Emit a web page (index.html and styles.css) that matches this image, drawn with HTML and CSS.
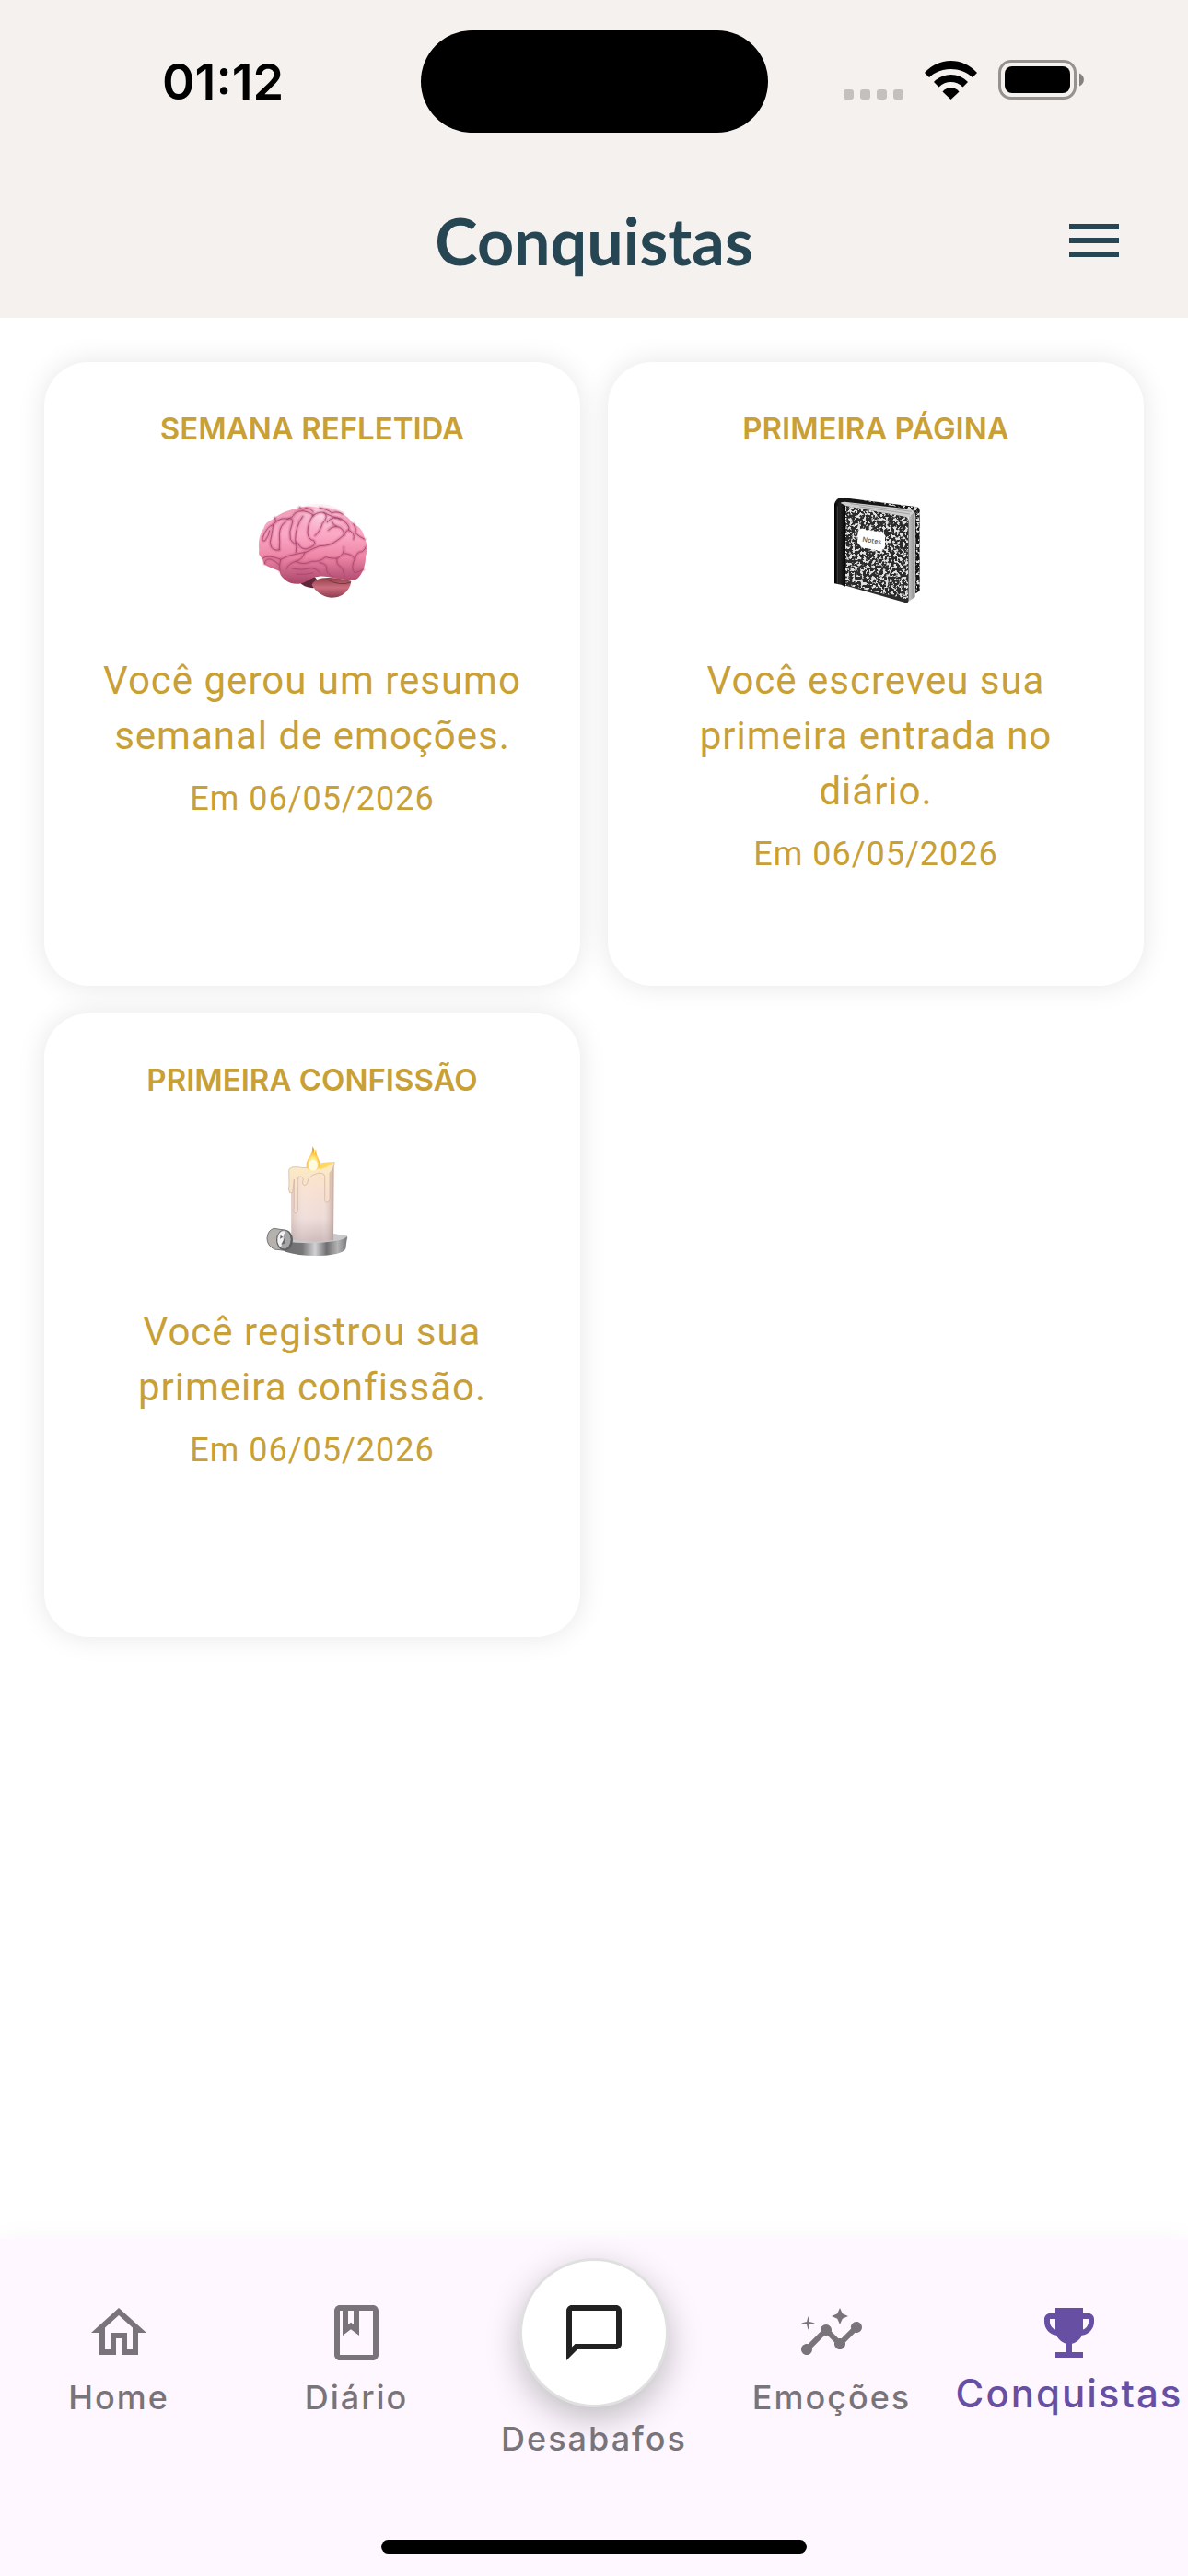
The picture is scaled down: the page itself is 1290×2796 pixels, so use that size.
FILE: index.html
```html
<!DOCTYPE html>
<html lang="pt-BR">
<head>
  <meta charset="UTF-8" />
  <meta name="viewport" content="width=device-width, initial-scale=1.0" />
  <title>Conquistas</title>
  <link rel="stylesheet" href="styles.css">
</head>
<body>

  <header class="topo">
    <div class="status">
      <span class="hora">01:12</span>
      <div class="ilha"></div>
      <div class="indicadores">
        <div class="sinal"><i></i><i></i><i></i><i></i></div>
        <svg class="wifi" viewBox="0 0 57 42">
          <path d="M0 13C16 -4.3 41 -4.3 57 13L52 18C39 6 18 6 5 18Z" />
          <path d="M10 23C20 12.3 37 12.3 47 23L41.5 28.5C34 21.2 23 21.2 15.5 28.5Z" />
          <path d="M19.5 33.5C24.5 27.5 32.5 27.5 37.5 33.5L28.5 42Z" />
        </svg>
        <svg class="bateria" viewBox="0 0 93 43">
          <rect x="1.5" y="1.5" width="82" height="40" rx="12.5" fill="none" stroke="#95928f" stroke-width="3" />
          <rect x="7" y="7" width="71" height="29" rx="8" />
          <path d="M88 14.5C94.500 17 94.500 26 88 28.500Z" fill="#84817f" />
        </svg>
      </div>
    </div>

    <div class="barra">
      <h1>Conquistas</h1>
      <button class="menu" aria-label="Abrir menu">
        <svg viewBox="0 0 24 24"><path d="M3 18h18v-2H3v2zm0-5h18v-2H3v2zm0-7v2h18V6H3z" /></svg>
      </button>
    </div>
  </header>

  <main class="conquistas">
    <article class="card">
      <h2>SEMANA REFLETIDA</h2>
      <svg class="emblema" viewBox="57 51 360 360">
        <defs>
          <linearGradient id="rosa" x1="0" y1="0" x2="0" y2="1">
            <stop offset="0" stop-color="#ee9db6" />
            <stop offset="0.35" stop-color="#fbaac6" />
            <stop offset="0.65" stop-color="#ee86a6" />
            <stop offset="1" stop-color="#a84468" />
          </linearGradient>
          <radialGradient id="brilho" cx="0.56" cy="0.22" r="0.4">
            <stop offset="0" stop-color="#ffdbe8" stop-opacity="0.9" />
            <stop offset="1" stop-color="#ffdbe8" stop-opacity="0" />
          </radialGradient>
          <linearGradient id="cerebelo" x1="0" y1="0" x2="0" y2="1">
            <stop offset="0" stop-color="#8f4048" />
            <stop offset="0.5" stop-color="#cd6d7e" />
            <stop offset="1" stop-color="#8d3c50" />
          </linearGradient>
          <g id="sulcos" fill="none" stroke-linecap="round" stroke-linejoin="round">
            <path d="M76 258Q92 244 134 262Q146 256 160 250Q200 240 216 238Q240 226 260 218Q296 218 318 200Q338 188 350 168" />
            <path d="M134 262Q128 280 132 300" />
            <path d="M82 276Q84 256 104 262Q118 266 128 278" />
            <path d="M116 126Q122 142 110 148Q88 156 76 190Q72 206 84 200Q96 184 98 168" />
            <path d="M110 148Q108 168 104 186Q96 206 104 222Q116 236 130 230" />
            <path d="M120 138Q140 124 156 130Q176 122 172 144Q160 170 166 196Q184 222 184 206" />
            <path d="M130 230Q132 206 130 180Q132 150 150 140" />
            <path d="M156 130Q172 128 180 112Q190 102 208 104Q232 108 240 118" />
            <path d="M184 238Q188 222 182 196Q184 150 206 122" />
            <path d="M240 118Q222 142 222 174Q224 198 242 200Q256 216 216 228Q196 226 192 210" />
            <path d="M240 118Q262 104 276 110Q292 120 270 146Q262 172 246 184" />
            <path d="M276 110Q302 124 332 130Q362 150 356 166" />
            <path d="M286 140Q306 116 330 132M290 166Q300 154 316 154Q340 158 342 182" />
            <path d="M316 154Q304 148 302 140M356 166Q378 176 372 196" />
            <path d="M372 146Q382 162 378 176Q390 188 408 196" />
            <path d="M262 94Q290 100 300 110Q322 104 336 114" />
            <path d="M196 92Q206 104 216 94Q234 96 240 106" />
            <path d="M212 240Q208 260 184 268Q160 274 154 292" />
            <path d="M184 268Q206 282 236 268Q262 270 280 254Q304 260 318 258Q344 246 340 222" />
            <path d="M318 258Q314 278 330 286Q340 294 342 320" />
            <path d="M174 292Q204 298 234 290Q250 290 262 304M186 310Q214 312 240 306" />
            <path d="M262 272Q288 276 284 296Q286 312 306 318" />
            <path d="M342 242Q366 244 376 260Q382 236 400 236Q412 226 411 222" />
            <path d="M376 260Q362 286 374 304Q384 306 404 294" />
          </g>
        </defs>
        <path fill="#60263a" d="M196 336L245 318L270 350L238 355Q208 352 196 336Z" />
        <path fill="url(#cerebelo)" d="M236 344C246 322 280 312 364 332C362 352 344 386 300 386C270 384 246 364 236 344Z" />
        <path fill="none" stroke="#7c3342" stroke-width="3" d="M282 326Q330 350 362 336" />
        <path fill="url(#rosa)" d="M64 232C60 205 66 176 80 158C84 140 104 134 116 126C134 110 158 102 184 96C214 86 240 88 262 94C292 90 318 98 336 114C354 122 364 138 372 146C396 156 406 176 408 196C420 214 416 236 411 252C412 280 400 312 384 324C370 334 352 330 340 326C310 326 282 312 256 318C240 318 228 328 212 336C196 344 166 344 148 328C134 316 130 306 132 300C116 294 100 288 88 282C76 274 76 264 76 258C64 252 62 246 64 232Z" />
        <ellipse cx="255" cy="155" rx="110" ry="75" fill="url(#brilho)" />
        <!-- sombra larga por baixo, risco fino por cima -->
        <use href="#sulcos" stroke="#c25a82" stroke-width="14" stroke-opacity="0.16" />
        <use href="#sulcos" stroke="#c25a82" stroke-width="8" stroke-opacity="0.25" />
        <use href="#sulcos" stroke="#a94468" stroke-width="3" stroke-opacity="0.85" />
      </svg>
      <p class="texto">Você gerou um resumo semanal de emoções.</p>
      <p class="data">Em 06/05/2026</p>
    </article>

    <article class="card">
      <h2>PRIMEIRA PÁGINA</h2>
      <svg class="emblema" viewBox="33 51 360 360">
        <defs>
          <!-- manchas do caderno -->
          <filter id="manchas" x="0" y="0" width="1" height="1">
            <feTurbulence type="fractalNoise" baseFrequency="0.11" numOctaves="2" seed="4" />
            <feColorMatrix type="matrix" values="0 0 0 0 0.75  0 0 0 0 0.75  0 0 0 0 0.75  10 0 0 0 -4.9" />
            <feComposite in2="SourceGraphic" operator="in" />
          </filter>
          <linearGradient id="paginas">
            <stop offset="0" stop-color="#f4f4f4" />
            <stop offset="1" stop-color="#8d8d8d" />
          </linearGradient>
          <linearGradient id="lombada">
            <stop offset="0" stop-color="#000" />
            <stop offset="0.5" stop-color="#242424" />
            <stop offset="1" stop-color="#050505" />
          </linearGradient>
        </defs>
        <path fill="#161616" d="M78 84Q82 60 104 60L348 91Q356 94 356 102V364L344 372L318 352L100 90Z" />
        <path filter="url(#manchas)" d="M160 68L348 91Q356 94 356 102V364L344 370V104L330 98Z" />
        <path fill="#cfcfcf" d="M94 84Q96 74 112 74L326 98Q340 102 342 116V384L318 400V130L110 88Z" />
        <path fill="url(#paginas)" d="M316 126L340 108V384L318 400Z" />
        <path fill="none" stroke="#8c8c8c" stroke-width="2" d="M324 122V394M330 116V390M336 112V386M130 80L330 106M160 90L324 114" />
        <path fill="#2b2b2b" d="M110 86L308 122Q320 126 320 138V396Q318 406 308 402L110 346Z" />
        <path filter="url(#manchas)" d="M112 86L308 122Q318 126 318 138V392L112 344Z" />
        <path fill="url(#lombada)" d="M78 340V84Q80 72 94 76L114 86V350L100 344Z" />
        <path fill="none" stroke="#5a5a5a" stroke-width="2" d="M88 88V340" />
        <path fill="#fff" d="M164 162Q172 158 180 166L226 172Q232 166 238 176Q246 182 243 196V216Q244 228 234 230Q226 238 216 232L178 224Q168 228 162 216Q150 210 154 196V178Q154 168 164 162Z" />
        <text x="168" y="203" transform="rotate(9 168 203)" class="notas">Notes</text>
      </svg>
      <p class="texto">Você escreveu sua primeira entrada no diário.</p>
      <p class="data">Em 06/05/2026</p>
    </article>

    <article class="card">
      <h2>PRIMEIRA CONFISSÃO</h2>
      <svg class="emblema" viewBox="27 42 360 360">
        <defs>
          <linearGradient id="metal">
            <stop offset="0" stop-color="#6d6d6f" />
            <stop offset="0.3" stop-color="#77777a" />
            <stop offset="0.5" stop-color="#d2d2d4" />
            <stop offset="0.68" stop-color="#6e6e71" />
            <stop offset="0.85" stop-color="#b4b4b4" />
            <stop offset="1" stop-color="#77777a" />
          </linearGradient>
          <linearGradient id="cera" x1="0" y1="0" x2="0" y2="1">
            <stop offset="0" stop-color="#fde6c4" />
            <stop offset="0.4" stop-color="#f6dfd2" />
            <stop offset="0.7" stop-color="#eedcd8" />
            <stop offset="1" stop-color="#cdbaba" />
          </linearGradient>
          <linearGradient id="sombra">
            <stop offset="0" stop-color="#a98c88" stop-opacity="0.25" />
            <stop offset="0.3" stop-color="#fff" stop-opacity="0.1" />
            <stop offset="0.7" stop-color="#fff" stop-opacity="0" />
            <stop offset="1" stop-color="#96706c" stop-opacity="0.5" />
          </linearGradient>
          <linearGradient id="borda" x1="0" y1="0" x2="0" y2="1">
            <stop offset="0" stop-color="#fdebc4" />
            <stop offset="1" stop-color="#f0dad2" />
          </linearGradient>
          <radialGradient id="chama" cx="0.5" cy="0.75" r="0.7">
            <stop offset="0" stop-color="#fffde0" />
            <stop offset="0.4" stop-color="#ffe98a" />
            <stop offset="0.75" stop-color="#f8b92a" />
            <stop offset="1" stop-color="#e08a12" />
          </radialGradient>
        </defs>
        <path fill="#c9c9cb" d="M110 350Q200 310 320 334Q328 346 310 356Q220 372 120 364Z" />
        <path fill="url(#metal)" d="M112 352Q200 364 276 352Q310 348 321 336L316 376Q308 394 248 398Q170 402 120 386Z" />
        <path fill="url(#cera)" d="M138 122Q200 116 278 96L276 348Q206 358 139 346Z" />
        <path fill="url(#sombra)" d="M138 122Q200 116 278 96L276 348Q206 358 139 346Z" />
        <path fill="url(#borda)" stroke="#d0aea0" stroke-width="2" d="M131 120Q134 108 160 110Q190 118 220 102Q252 94 280 95Q276 118 264 130V214Q262 226 254 226Q246 224 248 208V140Q246 128 226 130Q206 134 194 148Q192 170 182 170Q172 168 178 150Q174 138 162 142Q158 152 160 180V252Q158 264 150 260Q144 254 148 240V150L144 188Q142 198 134 194Q128 186 132 166Z" />
        <path fill="#ffd95c" d="M222 106Q246 92 276 97Q256 112 232 118Z" />
        <path fill="url(#chama)" d="M209 43Q216 54 214 68L219 52Q220 66 224 76Q236 96 230 112Q222 122 210 122Q192 122 188 108Q186 92 200 74Q208 60 209 43Z" />
        <ellipse cx="210" cy="104" rx="15" ry="18" fill="#fffbe0" />
        <path fill="#b5b2ae" stroke="#77777a" stroke-width="3" d="M82 310L122 316L118 382L84 378Q60 366 60 342Q62 316 82 310Z" />
        <ellipse cx="117" cy="348" rx="27" ry="34" fill="#5f5f62" />
        <ellipse cx="115" cy="346" rx="22" ry="30" fill="#a5a5a8" />
        <path fill="#f2f2f2" d="M98 330Q106 316 120 320Q110 334 114 350L104 372Q88 354 98 330Z" />
        <path fill="#66666a" d="M104 332L112 338L102 344ZM106 362L120 336L116 360Z" />
      </svg>
      <p class="texto">Você registrou sua primeira confissão.</p>
      <p class="data">Em 06/05/2026</p>
    </article>
  </main>

  <nav class="navegacao">
    <div class="abas">
      <a href="#home" class="aba">
        <svg viewBox="0 0 24 24"><path d="M12 5.690l5 4.500V18h-2v-6H9v6H7v-7.810l5-4.500M12 3L2 12h3v8h6v-6h2v6h6v-8h3L12 3z" /></svg>
        <span>Home</span>
      </a>
      <a href="#diario" class="aba">
        <svg viewBox="0 0 24 24"><path d="M18 2H6c-1.100 0-2 .9-2 2v16c0 1.100.9 2 2 2h12c1.100 0 2-.9 2-2V4c0-1.100-.9-2-2-2zM9 4h2v5l-1-.75L9 9V4zm9 16H6V4h1v9l3-2.250L13 13V4h5v16z" /></svg>
        <span>Diário</span>
      </a>
      <a href="#desabafos" class="aba central">
        <span class="bolha">
          <svg viewBox="0 0 24 24"><path d="M4 4h16v12H5.170L4 17.170V4m0-2c-1.100 0-1.990.9-1.990 2L2 22l4-4h14c1.100 0 2-.9 2-2V4c0-1.100-.9-2-2-2H4z" /></svg>
        </span>
        <span>Desabafos</span>
      </a>
      <a href="#emocoes" class="aba">
        <svg viewBox="0 0 24 24"><path d="M21 8c-1.450 0-2.260 1.440-1.930 2.510l-3.550 3.560c-.3-.09-.74-.09-1.040 0l-2.550-2.550C12.270 10.450 11.460 9 10 9c-1.450 0-2.270 1.440-1.930 2.520l-4.560 4.550C2.440 15.740 1 16.550 1 18c0 1.100.9 2 2 2 1.450 0 2.260-1.440 1.930-2.510l4.550-4.560c.3.090.74.090 1.040 0l2.550 2.550C12.730 16.550 13.540 18 15 18c1.450 0 2.270-1.440 1.930-2.520l3.560-3.550C21.560 12.260 23 11.450 23 10c0-1.100-.9-2-2-2z" /><path d="M15 9l.94-2.070L18 6l-2.060-.93L15 3l-.92 2.070L12 6l2.080.93zM3.500 11L4 9l2-.5L4 8l-.5-2L3 8l-2 .5L3 9z" /></svg>
        <span>Emoções</span>
      </a>
      <a href="#conquistas" class="aba ativa">
        <svg viewBox="0 0 24 24"><path d="M19 5h-2V3H7v2H5c-1.100 0-2 .9-2 2v1c0 2.550 1.920 4.630 4.390 4.940.63 1.500 1.980 2.630 3.610 2.960V19H7v2h10v-2h-4v-3.100c1.630-.33 2.980-1.460 3.610-2.960C19.080 12.630 21 10.550 21 8V7c0-1.100-.9-2-2-2zM5 8V7h2v3.820C5.840 10.400 5 9.300 5 8zm14 0c0 1.300-.84 2.400-2 2.820V7h2v1z" /></svg>
        <span>Conquistas</span>
      </a>
    </div>
    <div class="indicador-home"></div>
  </nav>

</body>
</html>
```
FILE: styles.css
```css
* {
  box-sizing: border-box;
}

body {
  margin: 0;
  min-height: 100vh;
  display: flex;
  flex-direction: column;
  background-color: #fff;
  font-family: Roboto, sans-serif;
}

h1, h2, p {
  margin: 0;
}

svg {
  display: block;
}

.topo {
  background-color: #f5f1ee;
}

.status {
  display: grid;
  grid-template-columns: 1fr 377px 1fr;
  align-items: center;
  padding-top: 33px;
}

.hora {
  padding-left: 176px;
  font-family: Inter, sans-serif;
  font-size: 54px;
  font-weight: 600;
}

.ilha {
  height: 111px;
  border-radius: 56px;
  background-color: #000;
}

.indicadores {
  display: flex;
  justify-content: flex-end;
  align-items: flex-end;
  gap: 23px;
  padding-right: 113px;
  padding-bottom: 4px;
}

.sinal {
  display: flex;
  gap: 7px;
}

.sinal i {
  width: 11px;
  height: 11px;
  border-radius: 3px;
  background-color: #c3c0bd;
}

.wifi {
  width: 57px;
  height: 42px;
}

.bateria {
  width: 93px;
  height: 43px;
}

.barra {
  display: grid;
  grid-template-columns: 1fr auto 1fr;
  align-items: center;
  height: 168px;
  margin-top: 33px;
  padding: 0 66px;
}

.barra h1 {
  grid-column: 2;
  font-family: Lato, sans-serif;
  font-size: 70px;
  font-weight: 700;
  line-height: 80px;
  color: #264653;
}

.menu {
  justify-self: end;
  padding: 0;
  border: none;
  background: none;
  cursor: pointer;
}

.menu svg {
  width: 72px;
  height: 72px;
  fill: #264653;
}

.conquistas {
  flex: 1;
  display: grid;
  grid-template-columns: 1fr 1fr;
  align-content: start;
  gap: 30px;
  padding: 48px;
}

.card {
  display: flex;
  flex-direction: column;
  align-items: center;
  min-height: 677px;
  padding: 48px;
  border-radius: 48px;
  background-color: #fff;
  box-shadow: 0 0 30px rgba(0, 0, 0, 0.1);
  color: #c9a035;
  text-align: center;
}

.card h2 {
  font-family: Inter, sans-serif;
  font-size: 33px;
  font-weight: 600;
  line-height: 48px;
}

.emblema {
  width: 120px;
  height: 120px;
  margin: 48px 0 52px;
}

.notas {
  font-family: "Open Sans", sans-serif;
  font-size: 22px;
  font-weight: 600;
  fill: #555;
}

.texto {
  font-size: 42px;
  line-height: 60px;
  letter-spacing: 1px;
}

.data {
  margin-top: 14px;
  font-size: 36px;
  line-height: 48px;
  letter-spacing: 1px;
}

.navegacao {
  height: 366px;
  display: flex;
  flex-direction: column;
  justify-content: space-between;
  align-items: center;
  padding-bottom: 24px;
  background-color: #fef7ff;
  box-shadow: 0 0 30px rgba(0, 0, 0, 0.04);
}

.abas {
  width: 100%;
  display: grid;
  grid-template-columns: repeat(5, 1fr);
}

.aba {
  display: flex;
  flex-direction: column;
  align-items: center;
  gap: 10px;
  padding-top: 66px;
  font-family: Inter, sans-serif;
  font-size: 36px;
  font-weight: 500;
  line-height: 48px;
  letter-spacing: 2px;
  color: #79747a;
  text-decoration: none;
}

.aba svg {
  width: 72px;
  height: 72px;
  fill: currentColor;
}

.ativa {
  font-size: 42px;
  line-height: 40px;
  color: #6750a4;
}

.central {
  padding-top: 21px;
}

.bolha {
  width: 162px;
  height: 162px;
  display: flex;
  justify-content: center;
  align-items: center;
  border: 3px solid #e0e0e0;
  border-radius: 50%;
  background-color: #fff;
  box-shadow: 0 12px 36px rgba(0, 0, 0, 0.25);
  color: #212121;
}

.indicador-home {
  width: 462px;
  height: 15px;
  border-radius: 8px;
  background-color: #000;
}
```
